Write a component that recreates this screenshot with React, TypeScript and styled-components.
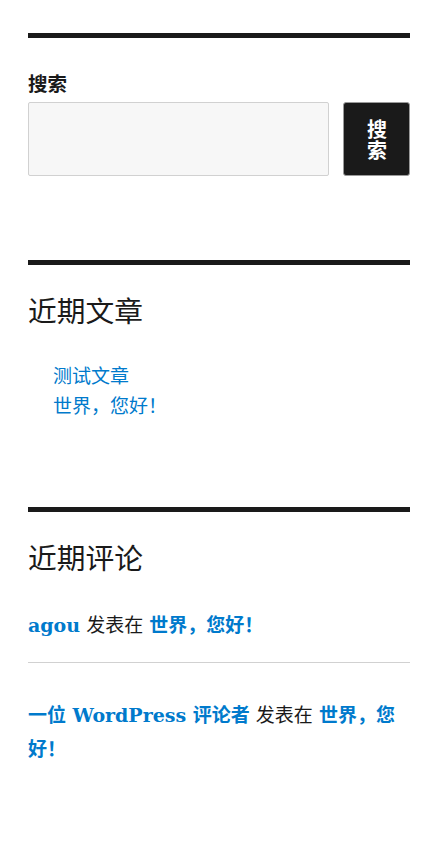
import * as React from "react";
import styled, { createGlobalStyle } from "styled-components";

const GlobalStyle = createGlobalStyle`
	html, body {
		margin: 0;
		padding: 0;
		background: #fff;
	}

	body {
		font-family: "DejaVu Serif", "Noto Sans CJK SC", serif;
		color: #1a1a1a;
	}
`;

const Sidebar = styled.aside`
	padding: 33px 29px 40px 28px;
`;

const Widget = styled.section<{ gap: number }>`
	border-top: 5px solid #1a1a1a;
	padding-top: 30px;
	margin-bottom: ${(props) => props.gap}px;
`;

const SearchLabel = styled.label`
	display: block;
	font-size: 19.5px;
	font-weight: 700;
	line-height: 34px;
`;

const SearchRow = styled.form`
	display: flex;
	align-items: stretch;
	gap: 14px;
	margin: 0;
`;

const SearchInput = styled.input`
	flex: 1;
	min-width: 0;
	height: 74px;
	box-sizing: border-box;
	margin: 0;
	background: #f7f7f7;
	border: 1px solid #d1d1d1;
	border-radius: 2px;
	font: inherit;
`;

const SearchButton = styled.button`
	width: 67px;
	box-sizing: border-box;
	margin: 0;
	padding: 0 23px;
	background: #1a1a1a;
	color: #fff;
	border: 1px solid #9a9a9a;
	border-radius: 3px;
	font-family: "Noto Sans CJK SC", sans-serif;
	font-size: 20px;
	font-weight: 700;
	line-height: 21px;
	word-break: break-all;
	cursor: pointer;
`;

const WidgetTitle = styled.h2`
	margin: 0 0 31px;
	font-size: 28.75px;
	font-weight: 400;
	line-height: 35px;
`;

const PostList = styled.ul`
	list-style: none;
	margin: 0;
	padding: 0 0 0 25px;
`;

const PostItem = styled.li`
	font-size: 19px;
	line-height: 30px;
`;

const Link = styled.a<{ bold?: boolean }>`
	color: #007acc;
	text-decoration: none;
	font-weight: ${(props) => (props.bold ? 700 : 400)};
`;

const CommentList = styled.ul`
	list-style: none;
	margin: 0;
	padding: 0;
`;

const CommentItem = styled.li<{ last?: boolean }>`
	font-size: 19px;
	line-height: 34px;
	padding: ${(props) => (props.last ? "35px 0 0" : "0 0 20px")};
	border-bottom: ${(props) => (props.last ? "none" : "1px solid #d1d1d1")};
`;

const posts = ["测试文章", "世界，您好！"];

const comments = [
	{ author: "agou", post: "世界，您好！" },
	{ author: "一位 WordPress 评论者", post: "世界，您好！" },
];

const App = (): JSX.Element => (
	<>
		<GlobalStyle />
		<Sidebar>
			<Widget gap={84}>
				<SearchLabel htmlFor="search-field">搜索</SearchLabel>
				<SearchRow onSubmit={(event) => event.preventDefault()}>
					<SearchInput id="search-field" type="search" />
					<SearchButton type="submit">搜索</SearchButton>
				</SearchRow>
			</Widget>

			<Widget gap={86}>
				<WidgetTitle>近期文章</WidgetTitle>
				<PostList>
					{posts.map((post) => (
						<PostItem key={post}>
							<Link href="#">{post}</Link>
						</PostItem>
					))}
				</PostList>
			</Widget>

			<Widget gap={0}>
				<WidgetTitle>近期评论</WidgetTitle>
				<CommentList>
					{comments.map((comment, index) => (
						<CommentItem key={comment.author} last={index === comments.length - 1}>
							<Link href="#" bold>
								{comment.author}
							</Link>{" "}
							发表在{" "}
							<Link href="#" bold>
								{comment.post}
							</Link>
						</CommentItem>
					))}
				</CommentList>
			</Widget>
		</Sidebar>
	</>
);

export default App;
